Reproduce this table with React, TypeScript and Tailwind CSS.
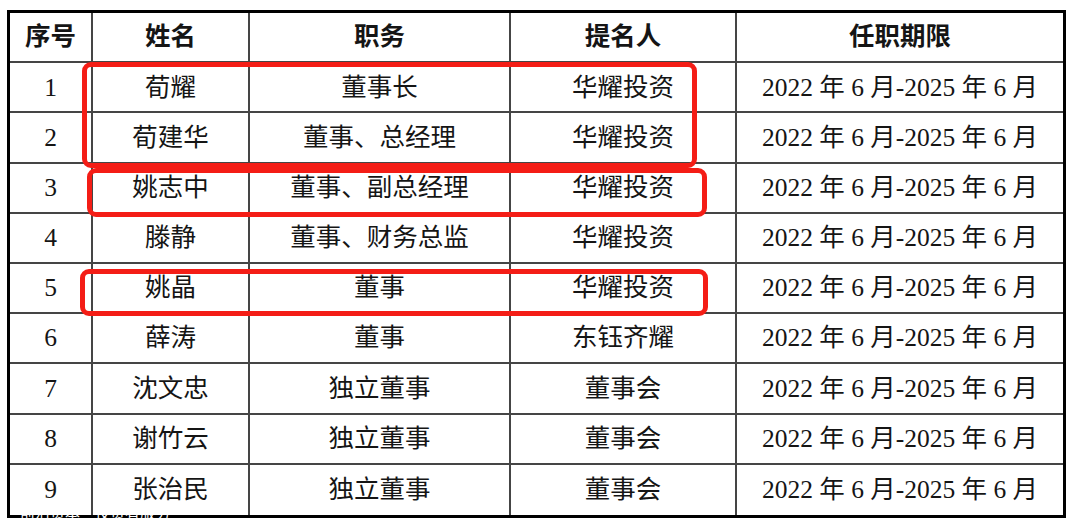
const rows = [
  ['1', '荀耀', '董事长', '华耀投资'],
  ['2', '荀建华', '董事、总经理', '华耀投资'],
  ['3', '姚志中', '董事、副总经理', '华耀投资'],
  ['4', '滕静', '董事、财务总监', '华耀投资'],
  ['5', '姚晶', '董事', '华耀投资'],
  ['6', '薛涛', '董事', '东钰齐耀'],
  ['7', '沈文忠', '独立董事', '董事会'],
  ['8', '谢竹云', '独立董事', '董事会'],
  ['9', '张治民', '独立董事', '董事会'],
];

const term = '2022 年 6 月-2025 年 6 月';

function Row({ cells, header, last }: { cells: string[]; header?: boolean; last?: boolean }) {
  return (
    <div
      className={`grid grid-cols-[83px_157px_261px_226px_326px] h-[50.2px] ${
        last ? '' : 'border-b-2 border-[#454545]'
      } ${header ? 'font-bold' : ''}`}
    >
      {cells.map((c, i) => (
        <div
          key={i}
          className={`flex items-center justify-center ${i < 4 ? 'border-r-2 border-[#454545]' : ''}`}
        >
          {c}
        </div>
      ))}
    </div>
  );
}

export default function App() {
  return (
    <div
      className="relative w-[1080px] h-[530px] bg-white overflow-hidden text-[25.5px] leading-none text-[#151515]"
      style={{ fontFamily: '"Liberation Serif", "Noto Sans CJK SC", serif' }}
    >
      <div className="pt-[10px] pl-[7px]">
        <div className="w-[1059px] border-[3px] border-black">
          <Row header cells={['序号', '姓名', '职务', '提名人', '任职期限']} />
          {rows.map((r, i) => (
            <Row key={r[0]} cells={[...r, term]} last={i === rows.length - 1} />
          ))}
        </div>
      </div>

      {/* red highlight boxes */}
      <div className="absolute left-[82px] top-[62px] w-[615px] h-[106px] border-[5px] border-[#f41d16] rounded-[9px]" />
      <div className="absolute left-[87px] top-[168px] w-[620px] h-[49px] border-[5px] border-[#f41d16] rounded-[9px]" />
      <div className="absolute left-[80px] top-[269px] w-[628px] h-[47px] border-[5px] border-[#f41d16] rounded-[9px]" />

      {/* watermark */}
      <div
        className="absolute left-[20px] top-[504px] text-[15px] text-white"
        style={{ fontFamily: '"Noto Sans CJK SC", sans-serif' }}
      >
        前沿资本·投资者服务
      </div>
    </div>
  );
}
